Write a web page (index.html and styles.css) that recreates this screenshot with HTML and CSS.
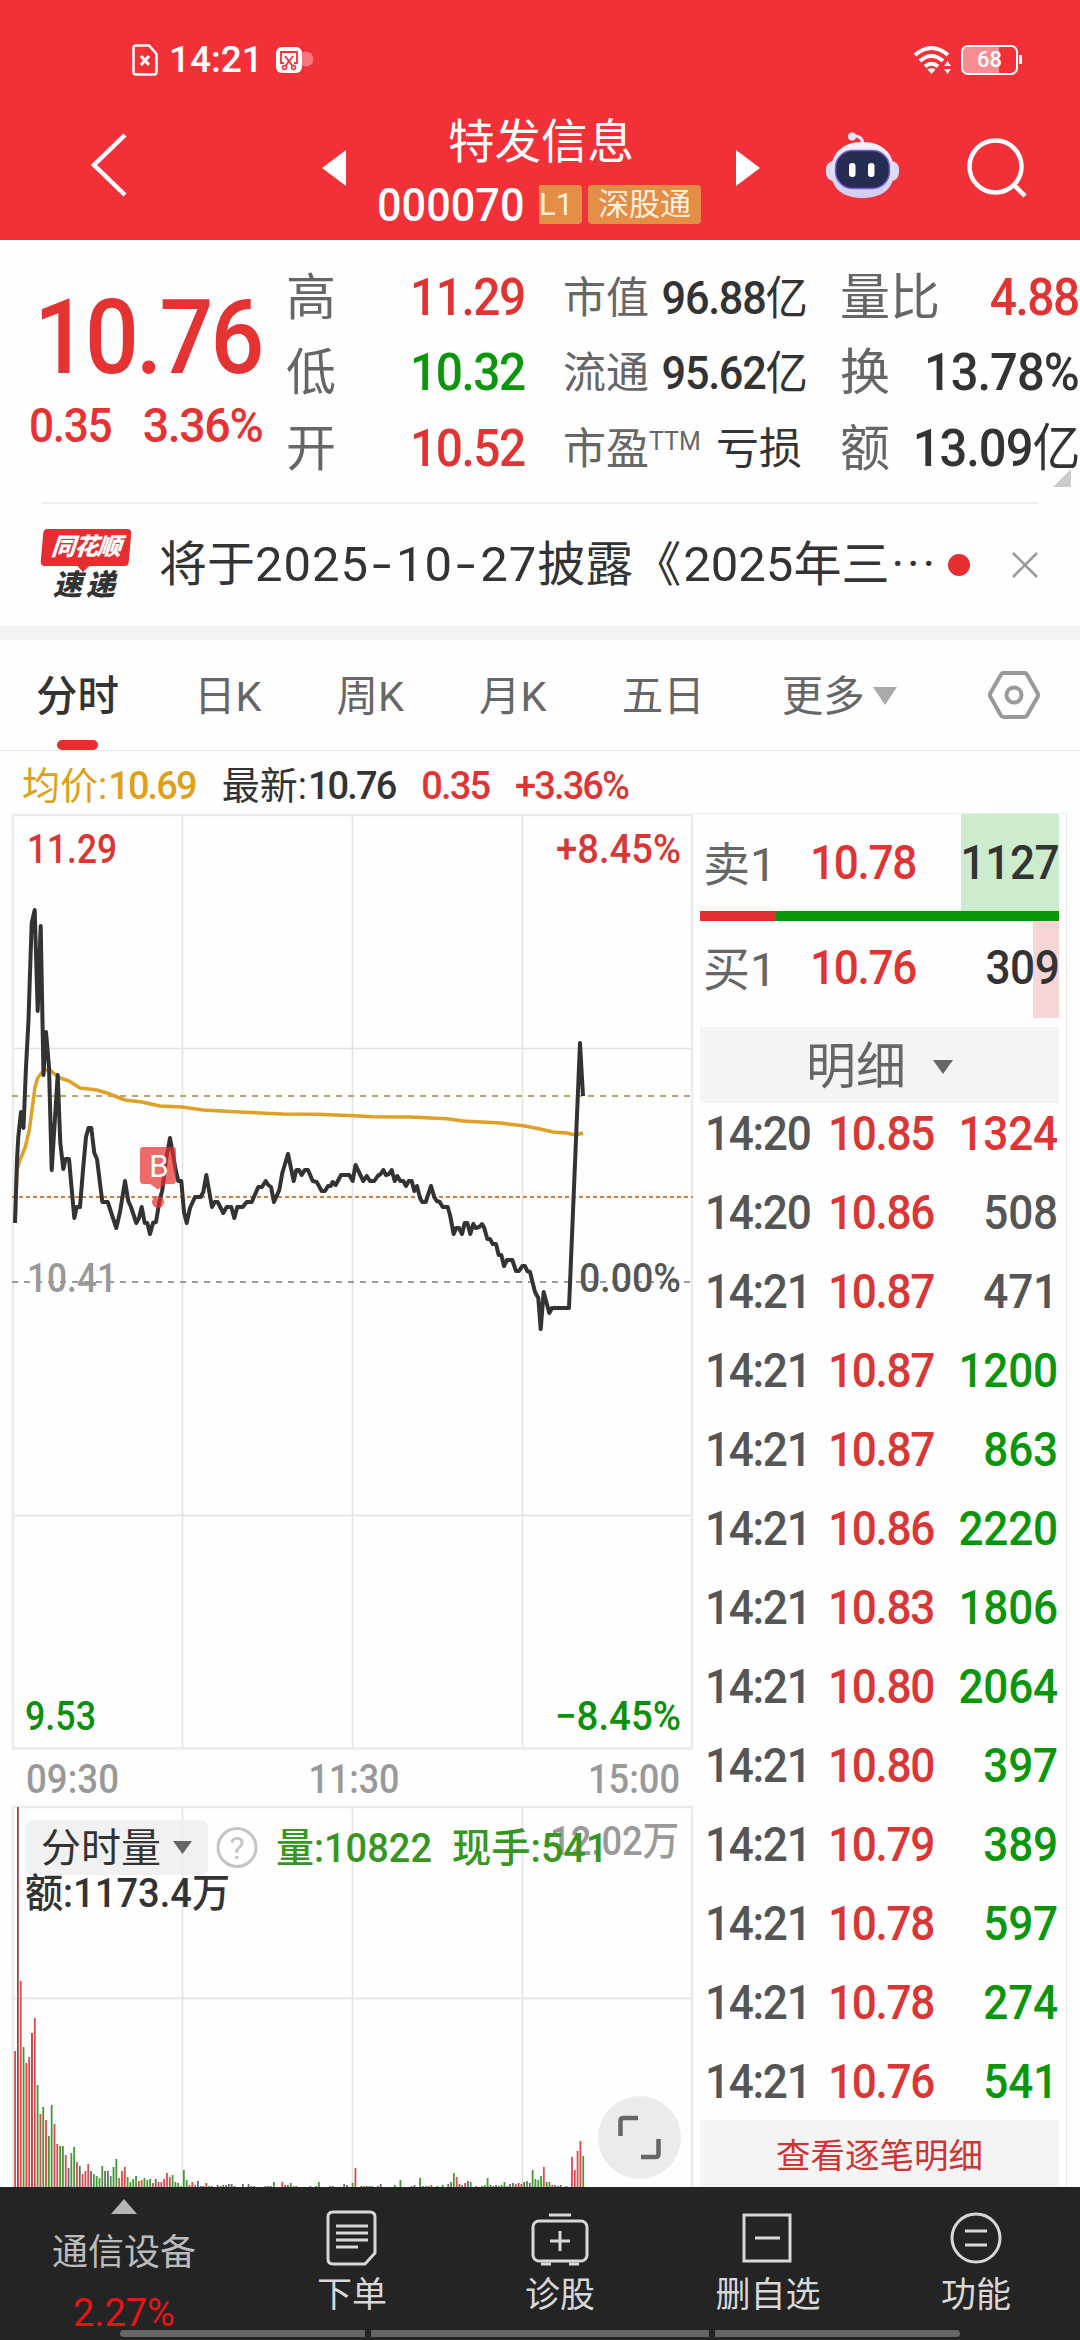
FILE: index.html
```html
<!DOCTYPE html>
<html lang="zh-CN">
<head>
    <meta charset="UTF-8">
    <meta name="viewport" content="width=device-width, initial-scale=1.0">
    <title>特发信息 000070</title>
    <link rel="stylesheet" href="styles.css">
</head>
<body>
    <!-- Header -->
    <header class="header">
        <div class="status-bar">
            <svg class="sim" width="26" height="32" viewBox="0 0 26 32">
                <path d="M4 1.5H17L24.500 10V28Q24.500 30.500 22 30.500H4Q1.500 30.500 1.500 28V4Q1.500 1.500 4 1.500Z" fill="none" stroke="#fff" stroke-width="2.500"/>
                <path d="M9 12L17 21M17 12L9 21" stroke="#fff" stroke-width="3"/>
            </svg>
            <span class="clock">14:21</span>
            <svg class="clip" width="40" height="28" viewBox="0 0 40 28">
                <circle cx="30" cy="13" r="7.500" fill="#fff" opacity=".35"/>
                <rect x="0" y="1" width="26" height="26" rx="6" fill="#fff"/>
                <path d="M8 17H5V6H21V17H18M9 10L16.500 20M17 10L9.500 20" fill="none" stroke="#f23037" stroke-width="1.800"/>
                <circle cx="8.500" cy="21.500" r="2" fill="none" stroke="#f23037" stroke-width="1.500"/>
                <circle cx="17.500" cy="21.500" r="2" fill="none" stroke="#f23037" stroke-width="1.500"/>
            </svg>
            <svg class="wifi" width="40" height="30" viewBox="0 0 40 30">
                <g fill="none" stroke="#fff" stroke-width="4">
                    <path d="M2 10Q18.500 -4 35 10"/>
                    <path d="M7 16Q18.500 6 30 16"/>
                    <path d="M12 21.500Q18.500 16 25 21.500"/>
                </g>
                <path d="M14.500 24.500Q18.500 21.500 22.500 24.500L18.500 29Z" fill="#fff"/>
                <path d="M31 21L34.500 16L38 21ZM31 24H38L34.500 29Z" fill="#fff"/>
            </svg>
            <div class="battery">68</div>
        </div>
        <div class="nav">
            <svg class="back" width="40" height="68" viewBox="0 0 40 68">
                <path d="M37 3L6 33L37 63" fill="none" stroke="#fff" stroke-width="4.500"/>
            </svg>
            <svg width="24" height="36" viewBox="0 0 24 36"><path d="M24 0V36L0 18Z" fill="#fff"/></svg>
            <div class="title">
                <h1>特发信息</h1>
                <div class="code">
                    <span class="num">000070</span>
                    <span class="tag tag-l1">L1</span>
                    <span class="tag">深股通</span>
                </div>
            </div>
            <svg width="24" height="36" viewBox="0 0 24 36"><path d="M0 0V36L24 18Z" fill="#fff"/></svg>
            <svg class="robot" width="74" height="68" viewBox="0 0 74 68">
                <defs>
                    <linearGradient id="shell" x1="0" y1="0" x2="0" y2="1">
                        <stop offset="0" stop-color="#f5f3fb"/>
                        <stop offset="1" stop-color="#cfcdf3"/>
                    </linearGradient>
                </defs>
                <path d="M27 4Q36 3 37 12" fill="none" stroke="#e4e1f6" stroke-width="3"/>
                <circle cx="26" cy="4.500" r="4" fill="#e9e4f5"/>
                <rect x="0" y="29" width="73" height="20" rx="8" fill="#dcd9f3"/>
                <path d="M36.500 10C58 10 68 23 68 39C68 57 56 66 36.500 66C17 66 5 57 5 39C5 23 15 10 36.500 10Z" fill="url(#shell)"/>
                <rect x="9.500" y="18.500" width="54" height="38" rx="17" fill="#252c51" stroke="#7c5ad8" stroke-width="1.500"/>
                <rect x="23" y="31" width="6.500" height="14" rx="3" fill="#fff"/>
                <rect x="42" y="31" width="6.500" height="14" rx="3" fill="#fff"/>
            </svg>
            <svg class="search" width="62" height="60" viewBox="0 0 62 60">
                <circle cx="28.500" cy="28.500" r="26" fill="none" stroke="#fff" stroke-width="4.500"/>
                <path d="M46.500 46.500L58 58" stroke="#fff" stroke-width="4.500"/>
            </svg>
        </div>
    </header>

    <!-- Quote summary -->
    <section class="quote">
        <div class="price">
            <div class="price-now num">10.76</div>
            <div class="price-change"><span class="num">0.35</span><span class="num right">3.36%</span></div>
        </div>
        <div class="stats">
            <div class="stat"><label>高</label><b class="num right red">11.29</b></div>
            <div class="stat mid"><label>市值</label><b class="num right">96.88<i>亿</i></b></div>
            <div class="stat"><label>量比</label><b class="num right red">4.88</b></div>
            <div class="stat"><label>低</label><b class="num right green">10.32</b></div>
            <div class="stat mid"><label>流通</label><b class="num right">95.62<i>亿</i></b></div>
            <div class="stat"><label>换</label><b class="num right wide">13.78%</b></div>
            <div class="stat"><label>开</label><b class="num right red">10.52</b></div>
            <div class="stat mid"><label>市盈<sup>TTM</sup></label><b class="loss">亏损</b></div>
            <div class="stat"><label>额</label><b class="num right wide">13.09<i>亿</i></b></div>
        </div>
        <span class="corner"></span>
    </section>

    <!-- News line -->
    <section class="news">
        <div class="badge">
            <div class="badge-top">同花顺</div>
            <div class="badge-bottom">速递</div>
        </div>
        <p>将于<span class="date">2025<u>-</u>10<u>-</u>27</span>披露《<span class="year">2025</span>年三<span class="more-dots">···</span></p>
        <span class="dot"></span>
        <svg width="26" height="26" viewBox="0 0 26 26"><path d="M1 1L25 25M25 1L1 25" stroke="#999" stroke-width="2.500"/></svg>
    </section>

    <!-- Period tabs -->
    <nav class="tabs">
        <span class="tab active">分时</span>
        <span class="tab">日K</span>
        <span class="tab">周K</span>
        <span class="tab">月K</span>
        <span class="tab">五日</span>
        <span class="tab more">更多</span>
        <svg class="gear" width="52" height="48" viewBox="0 0 52 48">
            <path d="M15.500 2H36.500Q38 2 39 3.500L49.500 22Q50.500 24 49.500 26L39 44.500Q38 46 36.500 46H15.500Q14 46 13 44.500L2.500 26Q1.500 24 2.500 22L13 3.500Q14 2 15.500 2Z" fill="none" stroke="#999" stroke-width="4"/>
            <circle cx="26" cy="24" r="7.500" fill="none" stroke="#999" stroke-width="4"/>
        </svg>
    </nav>

    <main class="main">
        <div class="left">
            <div class="info">
                <span class="avg">均价:<b>10.69</b></span>
                <span>最新:<b>10.76</b></span>
                <b class="red">0.35</b>
                <b class="red">+3.36%</b>
            </div>

            <!-- Price chart -->
            <svg class="chart" width="700" height="1375" viewBox="0 812 700 1375">
                <g class="grid">
                    <path d="M182.500 815V1748M352.500 815V1748M522.500 815V1748M13 1048.500H692M13 1515.500H692"/>
                    <path d="M182.500 1807V2187M352.500 1807V2187M522.500 1807V2187M13 1998.500H692"/>
                </g>
                <g class="frame">
                    <path d="M13 815H692V1748.500H13Z"/>
                    <path d="M13 2187V1807H692V2187"/>
                </g>
                <path class="dash-last" d="M12 1096H692"/>
                <path class="dash-cost" d="M12 1197H693"/>
                <path class="dash-prev" d="M12 1282H692"/>

                <polyline class="avg-line" points="15,1223 17,1170 20,1160 25,1148 29.300,1130 32,1110 35,1087 37.700,1078 43,1071 49,1069 53.300,1073 60,1078 69,1081 80,1088 96.700,1090 107,1093 125,1100 141.700,1102 160,1106 182,1107 203,1110 240,1112 283,1114 317,1114.300 360,1116 373,1116.700 410,1117 447,1118.700 463,1121 500,1123 525,1126 540,1129 553,1132 567,1133 575,1135 583,1133"/>
                <polyline class="price-line" points="15,1223 17,1160 18.300,1137 21,1112 23.500,1128 26,1067 28.500,1020 30,973 31.700,923 34.700,910 37.700,1011 40.700,926 43.500,1075 46,1032 49,1067 51.700,1170 57.700,1075 60.300,1143 63.300,1169 65.500,1159 69,1159 74.300,1218 76.700,1207 80,1207 83,1170 86,1137 88.500,1128 91.300,1128 94.300,1153 97,1159 102.300,1202 107.700,1202 116.300,1228 120,1212 125,1181 128.300,1201 131,1207 136.300,1223 139,1218 141.700,1207 144.700,1223 147.300,1223 150,1234 153,1223 156,1222 159.300,1202 162.300,1190 166,1160 170,1138 175.700,1170 178.300,1181 181.300,1181 184,1212 186.700,1223 190,1208 195,1197 200.700,1197 203.300,1192 206.300,1175 209.300,1192 212,1207 214.700,1202 217.700,1202 223.300,1213 226.700,1207 231.300,1207 234.300,1218 237.300,1207 242.700,1207 246.700,1202 251.700,1202 258.300,1187 262,1187 265.700,1181 268.300,1185 271,1187 274,1202 279.300,1190 282.300,1173 288,1154 293.700,1181 296.300,1170 299,1170 301.700,1175 304.700,1170 308,1170 312.700,1181 316.700,1182 321.700,1191 325,1191 328,1186 330.700,1186 332.700,1182 335.700,1185 341,1175 349.300,1175 352.700,1181 355.500,1165 363.300,1181 366.700,1176 370,1181 374.300,1181 377.700,1176 380.700,1174 383.300,1170 386,1175 389,1174 391.700,1170 394.700,1181 397.300,1176 400.300,1181 403.300,1181 406,1186 408.700,1181 411.700,1181 414.300,1191 417,1186 420,1198 422.300,1202 425.700,1202 431,1186 434.300,1197 436.700,1201 439.700,1202 442.700,1207 447.700,1207 450,1215 453.700,1234 456.300,1228 459,1228 462,1234 464.700,1223 467.300,1223 470.300,1234 473.300,1224 475.700,1228 479.300,1227 482,1224 484.300,1228 487.300,1239 490,1239 492.700,1244 496,1244 498.700,1255 501.300,1255 504,1266 507,1260 512.300,1260 516,1271 519,1271 522.300,1266 525,1266 527.300,1271 530,1272 535,1292 538.300,1298 540.700,1329 543.700,1292 549.300,1313 552,1308 569,1308 580,1043 583,1096"/>

                <!-- Buy marker -->
                <g class="marker">
                    <path d="M143 1147H173Q176 1147 176 1150V1180Q176 1184 173 1184H166L158 1189.500L150 1184H143Q140 1184 140 1180V1150Q140 1147 143 1147Z"/>
                    <circle cx="158" cy="1202" r="6"/>
                </g>
                <text class="marker-text" x="159" y="1177">B</text>

                <g class="axis">
                    <text class="t-red" x="27" y="863" textLength="90" lengthAdjust="spacingAndGlyphs">11.29</text>
                    <text class="t-red end" x="681" y="863" textLength="125" lengthAdjust="spacingAndGlyphs">+8.45%</text>
                    <text class="t-gray" x="27" y="1292" textLength="90" lengthAdjust="spacingAndGlyphs">10.41</text>
                    <text class="t-dark end" x="681" y="1292" textLength="102" lengthAdjust="spacingAndGlyphs">0.00%</text>
                    <text class="t-green" x="25" y="1730" textLength="71" lengthAdjust="spacingAndGlyphs">9.53</text>
                    <text class="t-green end" x="681" y="1730" textLength="126" lengthAdjust="spacingAndGlyphs">−8.45%</text>
                    <text class="t-gray" x="26" y="1793" textLength="93" lengthAdjust="spacingAndGlyphs">09:30</text>
                    <text class="t-gray mid" x="354" y="1793" textLength="91" lengthAdjust="spacingAndGlyphs">11:30</text>
                    <text class="t-gray end" x="680" y="1793" textLength="92" lengthAdjust="spacingAndGlyphs">15:00</text>
                </g>

                <g id="volume"></g>

                <!-- Volume legend -->
                <rect x="26" y="1820" width="182" height="55" rx="7" fill="#eee" opacity=".85"/>
                <text class="vol-name" x="41" y="1862">分时量</text>
                <path d="M173 1841H192L182.500 1854Z" fill="#666"/>
                <circle cx="237" cy="1847.500" r="19" fill="none" stroke="#c4c4c4" stroke-width="3"/>
                <text class="help" x="237" y="1859">?</text>
                <g class="axis">
                    <text class="t-gray end" x="679" y="1855" textLength="129" lengthAdjust="spacingAndGlyphs">12.02万</text>
                    <text class="t-vol" x="276" y="1862" textLength="156" lengthAdjust="spacingAndGlyphs">量:10822</text>
                    <text class="t-vol" x="452" y="1862" textLength="156" lengthAdjust="spacingAndGlyphs">现手:541</text>
                    <text class="t-black" x="25" y="1907" textLength="205" lengthAdjust="spacingAndGlyphs">额:1173.4万</text>
                </g>

                <!-- Expand button -->
                <circle cx="639.500" cy="2137.500" r="41.500" fill="#ebebeb"/>
                <path d="M620.500 2136V2121Q620.500 2118 623.500 2118H638M658.500 2139V2154Q658.500 2157 655.500 2157H641" fill="none" stroke="#666" stroke-width="4.500"/>
            </svg>
        </div>

        <!-- Order book and trades -->
        <aside class="side">
            <div class="book sell"><span>卖1</span><b class="num red">10.78</b><b class="num right qty">1127</b></div>
            <div class="ratio"><i></i></div>
            <div class="book buy"><span>买1</span><b class="num red">10.76</b><b class="num right qty">309</b></div>
            <div class="detail-head">明细<i></i></div>
            <div class="trades">
                <div class="trade"><span>14:20</span><span>10.85</span><span class="red">1324</span></div>
                <div class="trade"><span>14:20</span><span>10.86</span><span class="dark">508</span></div>
                <div class="trade"><span>14:21</span><span>10.87</span><span class="dark">471</span></div>
                <div class="trade"><span>14:21</span><span>10.87</span><span>1200</span></div>
                <div class="trade"><span>14:21</span><span>10.87</span><span>863</span></div>
                <div class="trade"><span>14:21</span><span>10.86</span><span>2220</span></div>
                <div class="trade"><span>14:21</span><span>10.83</span><span>1806</span></div>
                <div class="trade"><span>14:21</span><span>10.80</span><span>2064</span></div>
                <div class="trade"><span>14:21</span><span>10.80</span><span>397</span></div>
                <div class="trade"><span>14:21</span><span>10.79</span><span>389</span></div>
                <div class="trade"><span>14:21</span><span>10.78</span><span>597</span></div>
                <div class="trade"><span>14:21</span><span>10.78</span><span>274</span></div>
                <div class="trade"><span>14:21</span><span>10.76</span><span>541</span></div>
            </div>
            <div class="detail-link">查看逐笔明细</div>
        </aside>
    </main>

    <!-- Bottom bar -->
    <footer class="footer">
        <div class="sector">
            <i></i>
            <span>通信设备</span>
            <em>2.27%</em>
        </div>
        <div class="action">
            <svg width="60" height="60" viewBox="0 0 60 60">
                <path d="M11 5H48Q53 5 53 10V46L43 57H11Q6 57 6 52V10Q6 5 11 5Z"/>
                <path d="M14 19H46M14 26H46M14 33H46M14 40H36"/>
            </svg>
            <span>下单</span>
        </div>
        <div class="action">
            <svg width="60" height="60" viewBox="0 0 60 60">
                <rect x="3" y="14" width="54" height="40" rx="6"/>
                <path d="M19 8H41M30 24V44M20 34H40"/>
                <path d="M11 57H21M39 57H49"/>
            </svg>
            <span>诊股</span>
        </div>
        <div class="action">
            <svg width="60" height="60" viewBox="0 0 60 60">
                <path d="M6 8H52V54H6ZM17 31H42"/>
            </svg>
            <span>删自选</span>
        </div>
        <div class="action">
            <svg width="60" height="60" viewBox="0 0 60 60">
                <circle cx="30" cy="31" r="24"/>
                <path d="M19 24H41M19 38H41"/>
            </svg>
            <span>功能</span>
        </div>
        <div class="home-bar"><i></i><i></i><i></i></div>
    </footer>

    <script src="volume.js"></script>
</body>
</html>
```
FILE: volume.js
```js
// One entry per minute: colour letter + bar height ("0" = nothing to draw)
const minutes = ("r136 d380 r206 g140 r124 r130 d154 r169 g102 r73 g80 r67 g51 g82 r63 r43 g41 g41 r32 k19 " +
    "g34 g40 r25 k21 r13 r16 r23 k16 g13 g11 g9 g21 k16 k16 g11 g20 g28 r9 r16 r20 " +
    "g10 g5 g8 g11 r6 r7 g9 g7 g8 r4 k8 r5 r5 r8 r14 r10 g12 g5 g4 g1 " +
    "g17 g7 r2 r5 r2 k6 k1 k1 r4 g1 g1 0 k2 g1 g2 k2 k3 k3 g1 0 " +
    "0 k3 0 k3 k1 k1 0 0 0 g1 k1 g1 g5 0 0 r5 r2 k2 g4 g1 " +
    "r1 0 0 0 0 g1 0 g1 g5 0 0 0 k1 k1 0 0 0 k3 k2 0 " +
    "g4 r19 0 g1 r1 k1 g1 k1 0 r1 k3 0 0 0 0 g2 0 g7 0 0 " +
    "0 k1 k2 0 g9 k1 g1 k1 r2 0 g1 0 g2 0 k3 g5 g14 r10 k3 k2 " +
    "r4 k6 g5 0 k1 0 r1 g2 g9 k2 g1 k2 k1 g2 g5 r1 k3 k4 r3 k4 " +
    "r3 k5 g6 k4 g17 g8 g7 g11 r20 g5 g5 r2 k2 k1 k2 0 k1 0 r30 r17 " +
    "r36 r46 g31").split(" ");

const colors = { r: "#dc4a4a", d: "#a84444", g: "#429a36", k: "#6a6a6a" };
const volume = document.getElementById("volume");
const bottom = 2187;

minutes.forEach((item, i) => {
    if (item === "0") return;
    const height = Number(item.slice(1));
    const bar = document.createElementNS("http://www.w3.org/2000/svg", "rect");
    bar.setAttribute("x", (14.2 + i * 2.8125).toFixed(2));
    bar.setAttribute("y", bottom - height);
    bar.setAttribute("width", 1.8);
    bar.setAttribute("height", height);
    bar.setAttribute("fill", colors[item[0]]);
    volume.appendChild(bar);
});
```
FILE: styles.css
```css
* {
    margin: 0;
    padding: 0;
    box-sizing: border-box;
}

body {
    width: 1080px;
    height: 2340px;
    overflow: hidden;
    background-color: #fefefe;
    color: #333;
    font-family: Roboto, "Noto Sans CJK SC", sans-serif;
}

i, em {
    font-style: normal;
}

svg {
    display: block;
    flex: none;
}

/* Narrow figures */
.num {
    font-weight: 500;
    letter-spacing: -0.03em;
    transform: scaleX(0.92);
    transform-origin: left;
}

.num.right {
    transform-origin: right;
}

.num.wide {
    letter-spacing: -0.02em;
    transform: scaleX(0.94);
}

.red {
    color: #e03434;
}

.green {
    color: #0a960a;
}

/* Header */
.header {
    height: 240px;
    background-color: #f23037;
    color: #fff;
}

.status-bar {
    display: flex;
    align-items: center;
    height: 86px;
    padding: 34px 60px 0 132px;
}

.clock {
    margin-left: 11px;
    width: 96px;
    font-size: 37px;
    font-weight: 500;
    line-height: 54px;
}

.clip {
    margin-left: 11px;
}

.wifi {
    margin-left: auto;
}

.battery {
    position: relative;
    width: 57px;
    height: 30px;
    margin: 0 2px 0 8px;
    border: 2.5px solid #fff;
    border-radius: 7px;
    background: linear-gradient(90deg, #f98c90 68%, transparent 68%) content-box;
    font-size: 22px;
    font-weight: 500;
    line-height: 26px;
    text-align: center;
}

.battery::after {
    content: "";
    position: absolute;
    right: -6px;
    top: 8px;
    width: 3px;
    height: 9px;
    background-color: #fff;
}

.nav {
    display: flex;
    height: 154px;
    padding-top: 26px;
}

.nav > svg {
    margin-top: 38px;
}

.nav > .back {
    margin: 20px 194px 0 88px;
}

.title {
    width: 390px;
    text-align: center;
}

.title h1 {
    font-size: 46.500px;
    font-weight: 400;
    line-height: 60px;
}

.code {
    display: flex;
    align-items: center;
    margin-left: 31px;
    height: 64px;
    font-size: 47px;
}

.code .num {
    margin-right: 16px;
    width: 146px;
    text-align: left;
    letter-spacing: 0;
}

.tag {
    height: 39px;
    padding: 0 10px;
    border-radius: 4px;
    background-color: #e38d47;
    color: #fdf0dc;
    font-size: 31px;
    line-height: 40px;
}

.tag-l1 {
    margin-right: 6px;
    padding: 0 9px 0 0;
    border-radius: 0 4px 4px 0;
}

.nav > .robot {
    margin: 20px 67px 0 66px;
}

.nav > .search {
    margin-top: 26px;
}

/* Quote */
.quote {
    position: relative;
    display: flex;
    height: 262px;
    padding-top: 20px;
}

.price {
    width: 286px;
    padding-top: 24px;
    color: #e53232;
}

.price-now {
    padding-left: 37px;
    font-size: 103px;
    line-height: 108px;
}

.price-change {
    display: flex;
    justify-content: space-between;
    padding: 6px 24px 0 29px;
    font-size: 48px;
    line-height: 56px;
}

.price-change .right {
    transform: scaleX(0.97);
}

.stats {
    display: grid;
    grid-template-columns: 239px 239px 239px;
    grid-auto-rows: 75.500px;
    column-gap: 38px;
}

.stat {
    display: flex;
    justify-content: space-between;
    align-items: center;
    white-space: nowrap;
    font-size: 50px;
    line-height: 70px;
}

.stat label {
    color: #666;
}

.stat b {
    font-weight: 500;
    font-size: 52px;
}

.stat i {
    font-weight: 400;
    font-size: 51px;
}

.stat.mid {
    font-size: 43px;
}

.stat.mid b {
    font-size: 47px;
}

.stat.mid i {
    font-size: 46px;
}

.stat.mid .loss {
    font-size: 43px;
    font-weight: 400;
}

.stat sup {
    font-size: 25px;
    vertical-align: 14px;
    line-height: 0;
}

.corner {
    position: absolute;
    right: 9px;
    bottom: 15px;
    border-left: 18px solid transparent;
    border-bottom: 18px solid #ccc;
}

/* News */
.news {
    display: flex;
    align-items: center;
    height: 124px;
    margin: 0 42px;
    border-top: 2px solid #eee;
}

.badge {
    width: 88px;
    height: 72px;
    text-align: center;
    font-style: italic;
    font-weight: 900;
}

.badge-top {
    position: relative;
    height: 37px;
    border-radius: 4px;
    background-color: #e62e30;
    color: #fff;
    font-size: 24px;
    line-height: 36px;
    letter-spacing: -1px;
    transform: skewX(-5deg);
}

.badge-top::after {
    content: "";
    position: absolute;
    left: 37px;
    top: 37px;
    border: 6px solid transparent;
    border-top-color: #e62e30;
}

.badge-bottom {
    font-size: 29px;
    line-height: 38px;
    letter-spacing: 4px;
}

.news p {
    margin-left: 29px;
    width: 787px;
    font-size: 48px;
    line-height: 70px;
    white-space: nowrap;
}

.news .date {
    font-size: 49px;
    letter-spacing: 1px;
}

.news .date u {
    display: inline-block;
    width: 27px;
    text-align: center;
    text-decoration: none;
    transform: scaleX(1.4);
}

.news .year {
    margin-left: 2px;
    font-size: 49px;
}

.news .more-dots {
    margin-left: 2px;
    letter-spacing: 3px;
}

.dot {
    width: 22px;
    height: 22px;
    margin: 0 42px 0 3px;
    border-radius: 50%;
    background-color: #e62e30;
}

/* Tabs */
.tabs {
    display: flex;
    height: 125px;
    padding-left: 36px;
    border-top: 14px solid #f4f4f4;
    border-bottom: 1px solid #e6e6e6;
    color: #666;
    font-size: 41.500px;
    line-height: 114px;
}

.tab {
    margin-right: 75px;
}

.tab.active {
    position: relative;
    color: #333;
    font-weight: 500;
}

.tab.active::after {
    content: "";
    position: absolute;
    left: 21px;
    bottom: 0;
    width: 41px;
    height: 10px;
    border-radius: 5px;
    background-color: #e62e30;
}

.tab.more::after {
    content: "";
    display: inline-block;
    margin-left: 8px;
    border: 12px solid transparent;
    border-top: 18px solid #aaa;
    border-bottom: 0;
    vertical-align: 6px;
}

.tab.more {
    margin: 0 0 0 2px;
}

.gear {
    margin: 31px 40px 0 auto;
}

/* Main */
.main {
    display: flex;
    height: 1436px;
}

.left {
    width: 693px;
}

.info {
    display: flex;
    gap: 26px;
    height: 61px;
    padding: 7px 0 0 22px;
    font-size: 38px;
    line-height: 56px;
}

.info b {
    font-weight: 500;
    letter-spacing: -0.05em;
}

.info span b {
    margin-left: 1px;
}

.info .avg {
    color: #dfa017;
}

/* Chart */
.grid path {
    fill: none;
    stroke: #e2e2e2;
    stroke-width: 1.5;
}

.frame path {
    fill: none;
    stroke: #ebebeb;
    stroke-width: 2.5;
}

.dash-last, .dash-cost, .dash-prev {
    stroke-width: 1.8;
    stroke-dasharray: 6 6;
}

.dash-last {
    stroke: #bba66f;
}

.dash-cost {
    stroke: #d47f3c;
    stroke-dasharray: 4 3;
}

.dash-prev {
    stroke: #999;
}

.avg-line, .price-line {
    fill: none;
    stroke: #dfa027;
    stroke-width: 3.5;
    stroke-linejoin: round;
}

.price-line {
    stroke: #333;
    stroke-width: 4;
}

.marker {
    fill: #e62e2e;
    opacity: 0.7;
}

.marker-text {
    fill: #fff;
    font-size: 31px;
    text-anchor: middle;
}

.axis text {
    font-size: 40px;
    font-weight: 500;
}

.axis .end {
    text-anchor: end;
}

.axis .mid {
    text-anchor: middle;
}

.axis .t-red {
    fill: #d93636;
}

.axis .t-green {
    fill: #0a900a;
}

.axis .t-gray {
    fill: #999;
}

.axis .t-dark {
    fill: #555;
}

.axis .t-black {
    fill: #333;
}

.axis .t-vol {
    fill: #37961f;
}

.vol-name {
    fill: #333;
    font-size: 40px;
}

.help {
    fill: #c4c4c4;
    font-size: 32px;
    text-anchor: middle;
}

/* Order book */
.side {
    width: 374px;
    margin-top: 62px;
    padding: 0 7px;
    border-top: 1px solid #eee;
    border-right: 1px solid #e8e8e8;
}

.book {
    display: flex;
    align-items: center;
    height: 97px;
    padding-left: 3px;
    color: #666;
    font-size: 47px;
}

.book span {
    width: 107px;
    margin-top: -5px;
}

.book b {
    font-size: 48px;
}

.book .qty {
    margin-left: auto;
    color: #333;
    letter-spacing: -0.01em;
}

.sell {
    background: linear-gradient(#cdebcd, #cdebcd) right / 98px 100% no-repeat;
}

.buy {
    height: 97px;
    margin-bottom: 9px;
    padding-bottom: 4px;
    background: linear-gradient(#f9d6d6, #f9d6d6) right / 26px 100% no-repeat;
}

.ratio {
    height: 10px;
    background-color: #0a960a;
}

.ratio i {
    display: block;
    width: 76px;
    height: 10px;
    background-color: #e62e30;
}

.detail-head {
    display: flex;
    align-items: center;
    justify-content: center;
    height: 76px;
    padding-top: 3px;
    background-color: #f4f4f4;
    color: #666;
    font-size: 50px;
    line-height: 76px;
}

.detail-head i {
    margin: 0 0 0 27px;
    border: 10px solid transparent;
    border-top: 14px solid #666;
    border-bottom: 0;
}

.trades {
    margin-top: -9px;
    font-size: 48px;
    font-weight: 500;
}

.trade {
    display: grid;
    grid-template-columns: 123px 109px 1fr;
    height: 79px;
    padding: 0 1px 0 5px;
    line-height: 80px;
    color: #555;
}

.trade span {
    letter-spacing: -0.03em;
    transform: scaleX(0.92);
    transform-origin: left;
}

.trade span:nth-child(2) {
    color: #d93636;
}

.trade span:nth-child(3) {
    color: #0a960a;
    text-align: right;
    letter-spacing: -0.005em;
    transform-origin: right;
}

.trade span.red:nth-child(3) {
    color: #e03434;
}

.trade span.dark:nth-child(3) {
    color: #555;
}

.detail-link {
    height: 67px;
    margin-top: -1px;
    background-color: #f4f4f4;
    color: #cf3333;
    font-size: 34.500px;
    line-height: 72px;
    text-align: center;
}

/* Footer */
.footer {
    position: relative;
    display: grid;
    grid-template-columns: 248px repeat(4, 1fr);
    height: 153px;
    background-color: #242424;
    color: #d8d8d8;
    text-align: center;
    font-size: 35px;
}

.sector {
    display: flex;
    flex-direction: column;
    align-items: center;
    padding-top: 12px;
    color: #bbb;
}

.sector i {
    border: 13px solid transparent;
    border-top: 0;
    border-bottom: 15px solid #b5b5b5;
}

.sector span {
    height: 70px;
    font-size: 36px;
    line-height: 78px;
}

.sector em {
    color: #e81414;
    font-size: 38px;
    line-height: 58px;
}

.action svg {
    margin: 20px auto 0;
    fill: none;
    stroke: #d8d8d8;
    stroke-width: 3;
}

.action span {
    display: block;
    line-height: 58px;
}

.home-bar {
    position: absolute;
    left: 120px;
    bottom: 3px;
    display: flex;
    gap: 6px;
}

.home-bar i {
    width: 245px;
    height: 7px;
    border-radius: 4px 0 0 4px;
    background-color: #666;
}

.home-bar i:nth-child(2) {
    width: 338px;
    border-radius: 0;
}

.home-bar i:nth-child(3) {
    border-radius: 0 4px 4px 0;
}
```
